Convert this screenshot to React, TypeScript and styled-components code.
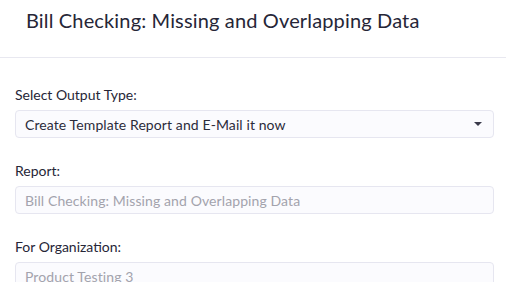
import styled, { createGlobalStyle } from 'styled-components'

const GlobalStyle = createGlobalStyle`
  body {
    margin: 0;
    background: #fff;
    font-family: Lato, "Open Sans", sans-serif;
    color: #2b2b3b;
  }
`

const Header = styled.div`
  height: 57px;
  border-bottom: 1px solid #e8e8f0;
  padding: 0 26px;
  display: flex;
  align-items: flex-start;
`
const Title = styled.h4`
  margin: 8px 0 0;
  font-size: 20px;
  font-weight: 400;
  line-height: 24px;
  letter-spacing: 0.15px;
  color: #262637;
`
const Body = styled.div`
  padding: 28px 12px 0 15px;
  display: flex;
  flex-direction: column;
  gap: 24px;
`
const Field = styled.div`
  display: flex;
  flex-direction: column;
  gap: 7px;
`
const Label = styled.label`
  font-size: 14px;
  line-height: 17px;
  color: #262637;
`
const Box = styled.div<{ $muted?: boolean }>`
  height: 28px;
  box-sizing: border-box;
  border: 1px solid #e6e6f0;
  border-radius: 4px;
  background: #fbfbfe;
  padding: 0 9px;
  display: flex;
  align-items: center;
  justify-content: space-between;
  font-size: 14px;
  letter-spacing: 0.1px;
  color: ${p => (p.$muted ? '#a3a3ad' : '#2b2b3b')};
`
const Caret = styled.span`
  width: 0;
  height: 0;
  border-left: 4px solid transparent;
  border-right: 4px solid transparent;
  border-top: 4px solid #3a3a4a;
  margin-right: 2px;
`

export default function App () {
  return (
    <>
      <GlobalStyle />
      <Header>
        <Title>Bill Checking: Missing and Overlapping Data</Title>
      </Header>
      <Body>
        <Field>
          <Label>Select Output Type:</Label>
          <Box>
            Create Template Report and E-Mail it now
            <Caret />
          </Box>
        </Field>
        <Field>
          <Label>Report:</Label>
          <Box $muted>Bill Checking: Missing and Overlapping Data</Box>
        </Field>
        <Field>
          <Label>For Organization:</Label>
          <Box $muted>Product Testing 3</Box>
        </Field>
      </Body>
    </>
  )
}
